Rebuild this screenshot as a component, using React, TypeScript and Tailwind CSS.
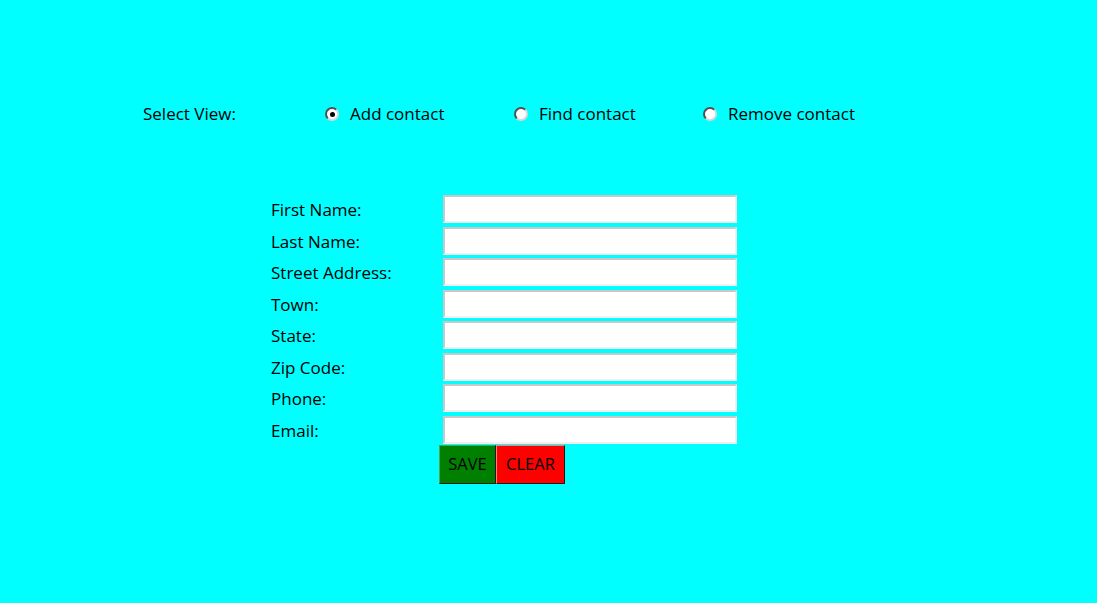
import { useState } from "react";

const fields = [
  "First Name:",
  "Last Name:",
  "Street Address:",
  "Town:",
  "State:",
  "Zip Code:",
  "Phone:",
  "Email:",
];

const views = [
  { id: "add", label: "Add contact" },
  { id: "find", label: "Find contact" },
  { id: "remove", label: "Remove contact" },
];

function Radio({ checked }: { checked: boolean }) {
  return (
    <span className="w-[14px] h-[14px] shrink-0 rounded-full bg-white border-2 border-t-[#505050] border-l-[#505050] border-b-[#d8d8d8] border-r-[#d8d8d8] flex items-center justify-center">
      {checked && <span className="w-[5px] h-[5px] rounded-full bg-black" />}
    </span>
  );
}

export default function App() {
  const [view, setView] = useState("add");
  const [values, setValues] = useState<string[]>(fields.map(() => ""));

  return (
    <div className="w-[1097px] h-[603px] bg-[#00ffff] font-['Open_Sans',sans-serif] text-[17px] text-black overflow-hidden">
      {/* view selector */}
      <div className="flex items-center pt-[102px] pl-[143px] h-[126px]">
        <span className="w-[182px]">Select View:</span>
        {views.map((v) => (
          <label
            key={v.id}
            onClick={() => setView(v.id)}
            className="flex items-center gap-[11px] cursor-pointer w-[189px]"
          >
            <Radio checked={view === v.id} />
            <span>{v.label}</span>
          </label>
        ))}
      </div>

      {/* form */}
      <div className="pt-[69px] pl-[271px]">
        <div className="flex flex-col gap-[3.5px]">
          {fields.map((f, i) => (
            <div key={f} className="flex items-center h-[28px]">
              <span className="w-[172px] pt-[2px]">{f}</span>
              <input
                value={values[i]}
                onChange={(e) => {
                  const next = [...values];
                  next[i] = e.target.value;
                  setValues(next);
                }}
                className="w-[294px] h-[28px] bg-white border-2 border-t-[#c8c8c8] border-l-[#c8c8c8] border-b-[#f0f0f0] border-r-[#f0f0f0] outline-none px-1"
              />
            </div>
          ))}
        </div>
        <div className="flex ml-[168px] mt-[1px]">
          <button
            onClick={() => setValues(values)}
            className="w-[57px] h-[39px] bg-[#008000] border border-t-[#4da64d] border-l-[#4da64d] border-b-[#1a1a1a] border-r-[#1a1a1a] text-[16.5px]"
          >
            SAVE
          </button>
          <button
            onClick={() => setValues(fields.map(() => ""))}
            className="w-[69px] h-[39px] bg-[#ff0000] border border-t-[#ff8080] border-l-[#ff8080] border-b-[#1a1a1a] border-r-[#1a1a1a] text-[16.5px]"
          >
            CLEAR
          </button>
        </div>
      </div>
    </div>
  );
}
